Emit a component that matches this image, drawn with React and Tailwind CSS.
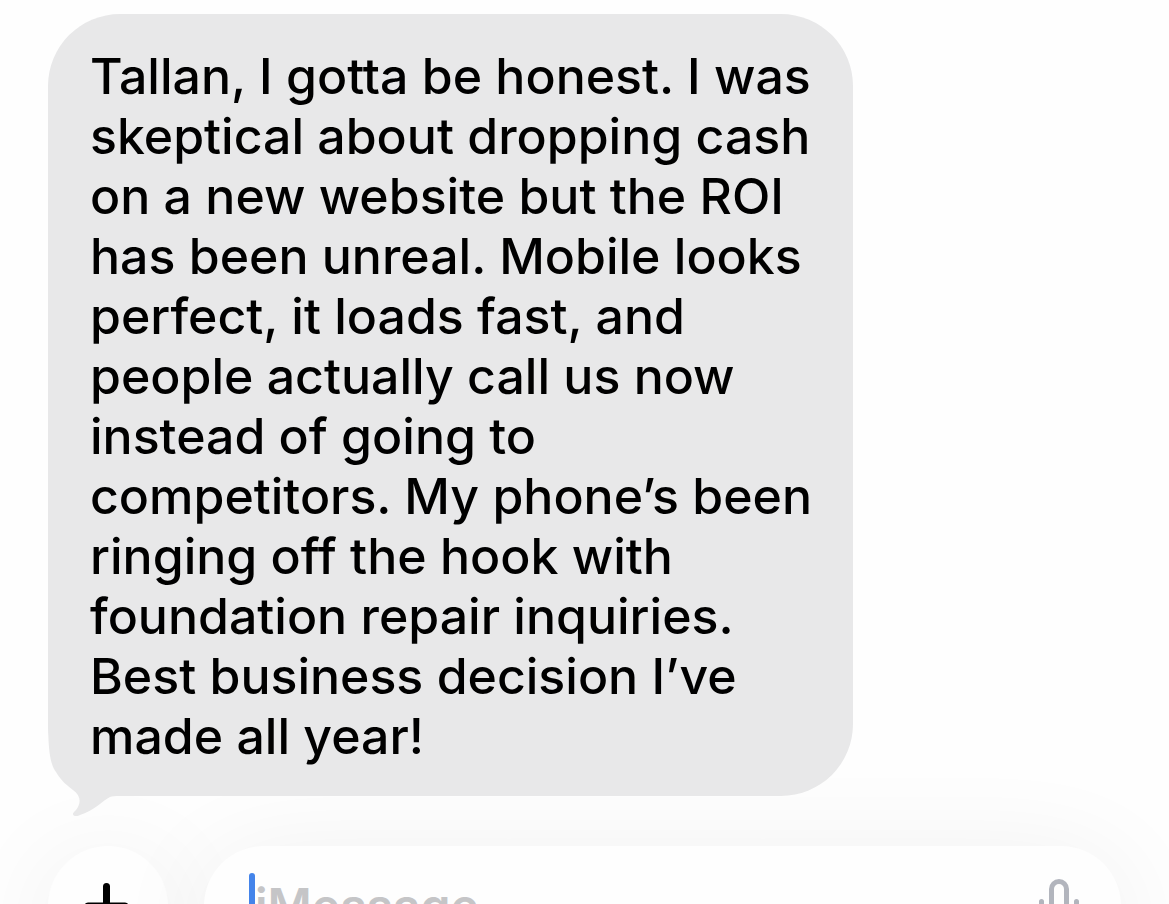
const lines = [
  'Tallan, I gotta be honest. I was',
  'skeptical about dropping cash',
  'on a new website but the ROI',
  'has been unreal. Mobile looks',
  'perfect, it loads fast, and',
  'people actually call us now',
  'instead of going to',
  'competitors. My phone’s been',
  'ringing off the hook with',
  'foundation repair inquiries.',
  'Best business decision I’ve',
  'made all year!',
]

function BubbleTail() {
  return (
    <svg className="absolute left-0 -bottom-5 text-[#e8e8e9]" width="80" height="100" viewBox="0 0 80 100" fill="currentColor" aria-hidden="true">
      <path d="M0 0 C0 34 2 48 8 56 C14 66 19 69 25 74 C32 79 33 85 30 91 C28 95 25 96 25 98 C25 100 28 101 32 99 C47 94 54 85 62 81 C64 80 67 80 72 80 L80 80 L80 0 Z" />
    </svg>
  )
}

function PlusIcon() {
  return (
    <svg width="48" height="48" viewBox="0 0 48 48" fill="none" stroke="currentColor" strokeWidth="7" strokeLinecap="round" aria-hidden="true">
      <path d="M22.5 4.5v41M4 24h37" />
    </svg>
  )
}

function MicIcon() {
  return (
    <svg width="40" height="56" viewBox="0 0 40 56" fill="none" stroke="currentColor" strokeWidth="5" strokeLinecap="round" aria-hidden="true">
      <rect x="12.5" y="3.5" width="15" height="34" rx="7.5" />
      <path d="M2.5 23.5v5a17.5 17.5 0 0 0 35 0v-5M20 46v7M12 53h16" />
    </svg>
  )
}

export default function App() {
  return (
    <div className="h-screen overflow-hidden bg-[#fefefe] font-['Inter','Noto_Sans',sans-serif] text-[50px] leading-[60px] font-medium text-black">

      {/* Conversation */}
      <main className="px-12 pt-[14px]">
        <div className="relative w-[75%] rounded-[72px] bg-[#e8e8e9] pt-8 pb-[30px] pl-[42px]">
          <BubbleTail />
          <p className="relative whitespace-nowrap">
            {lines.map(line => (
              <span key={line} className="block">{line} </span>
            ))}
          </p>
        </div>
      </main>

      {/* Composer */}
      <form className="flex gap-9 px-12 pt-[50px]" onSubmit={e => e.preventDefault()}>
        <button type="button" aria-label="Add attachment"
          className="flex size-[120px] shrink-0 items-center justify-center rounded-full bg-[#fefefe] shadow-[0_16px_110px_rgba(0,0,0,0.07)]">
          <PlusIcon />
        </button>

        <div className="flex h-[120px] min-w-0 flex-1 items-center rounded-full bg-[#fefefe] pr-[42px] pl-[45px] shadow-[0_16px_110px_rgba(0,0,0,0.07)]">
          <span className="h-[66px] w-[6px] shrink-0 rounded-full bg-[#4484ea]" />
          <input type="text" aria-label="Message" placeholder="iMessage"
            className="min-w-0 flex-1 bg-transparent text-[48px] font-semibold outline-none placeholder:text-[#c5c5c7]" />
          <button type="button" aria-label="Dictate" className="text-[#b2b5bd]">
            <MicIcon />
          </button>
        </div>
      </form>
    </div>
  )
}
